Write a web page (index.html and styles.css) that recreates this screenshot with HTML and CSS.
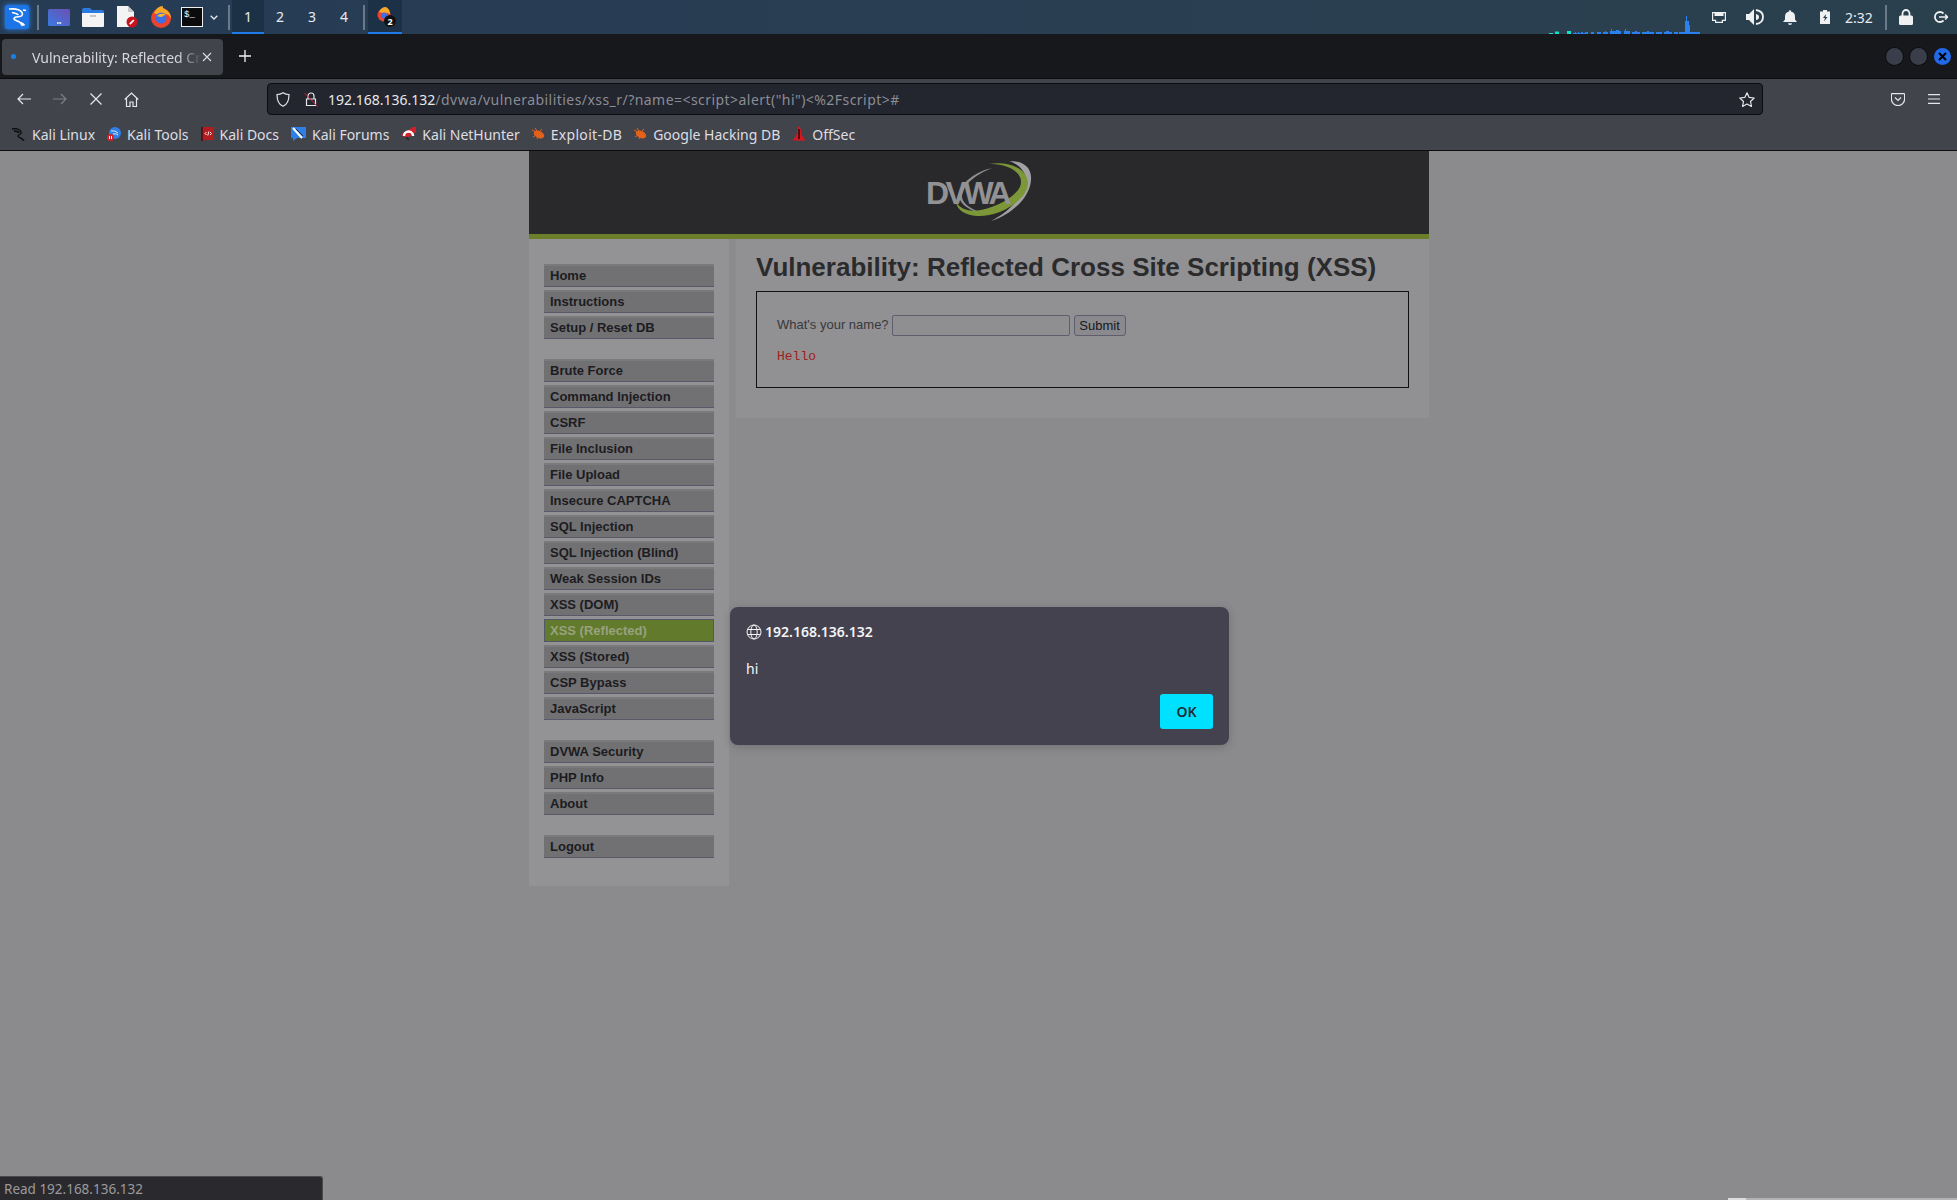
FILE: index.html
```html
<!DOCTYPE html>
<html lang="en">
<head>
<meta charset="utf-8">
<title>Vulnerability: Reflected Cross Site Scripting (XSS)</title>
<link rel="stylesheet" href="styles.css">
</head>
<body>
<div class="screen">
  <header class="taskbar">
    <span class="kali-btn">
      <svg width="24" height="24" viewBox="0 0 24 24"><rect width="24" height="24" rx="2" fill="#1d74e6"/><path d="M4 4c6-.5 11 .5 13 3.500 1.500 2.500-.5 4-3.500 4.200-3 .2-5.500 1-4 3 2 1.800 7 1.500 10 5.800M7 7.500c3 .5 5 1 6.500 2.500M18 5l3 .5M13 16c2 1 3.500 3 4.500 5" fill="none" stroke="#fff" stroke-width="1.600"/></svg>
    </span>
    <span class="sep first"></span>
    <span class="launch">
      <svg width="22" height="17" viewBox="0 0 22 17"><defs><linearGradient id="dg" x1="0" y1="1" x2="1" y2="0"><stop offset="0" stop-color="#3a7be0"/><stop offset="1" stop-color="#6b4fb4"/></linearGradient></defs><rect width="22" height="17" rx="1.500" fill="url(#dg)"/><path d="M9 14h1.200M10.500 14h1.200M12 14h1.200" stroke="#fff" stroke-width="1.500"/></svg>
    </span>
    <span class="launch">
      <svg width="22" height="19" viewBox="0 0 22 19"><path d="M0 2q0-2 2-2h6l2 2h10q2 0 2 2v3H0z" fill="#2a7be0"/><path d="M0 5h22v13q0 1-1 1H1q-1 0-1-1z" fill="#f4f4f4"/><path d="M8 8h6" stroke="#999" stroke-width="1"/></svg>
    </span>
    <span class="launch">
      <svg width="22" height="22" viewBox="0 0 22 22"><path d="M1 0h11l6 6v15H1z" fill="#f4f4f4"/><path d="M12 0l6 6h-6z" fill="#c8c8c8"/><circle cx="16" cy="16" r="5.500" fill="#c8141e"/><path d="M13.800 18.200l4-4" stroke="#fff" stroke-width="1.700"/></svg>
    </span>
    <span class="launch">
      <svg width="22" height="22" viewBox="0 0 22 22"><circle cx="11" cy="12" r="10" fill="#e8442e"/><path d="M4 7q3-7 9-7-1 2 2 3 6 3 6 10-2-5-6-5-5-1-7 1z" fill="#f9a825"/><circle cx="11" cy="12" r="5.500" fill="#3d6fe8"/><path d="M7 10q4-4 9-1-3 0-4 2-3 0-5-1z" fill="#fdb52a"/></svg>
    </span>
    <span class="launch term"><span class="term-box">$_</span></span>
    <svg class="chev" width="8" height="5" viewBox="0 0 8 5"><path d="M.7.7L4 4l3.300-3.300" fill="none" stroke="#e6e8ea" stroke-width="1.300"/></svg>
    <span class="sep"></span>
    <span class="ws active">1</span><span class="ws">2</span><span class="ws">3</span><span class="ws">4</span>
    <span class="sep mid"></span>
    <span class="task">
      <svg width="21" height="21" viewBox="0 0 21 21"><circle cx="8" cy="9" r="6.500" fill="#e8442e"/><path d="M3 6q2-5 7-5 4 2 4 7-4-2-7-1z" fill="#f9a825"/><circle cx="8" cy="9.500" r="3" fill="#3d6fe8"/><circle cx="14" cy="15" r="6" fill="#111"/><text x="14" y="18.500" class="badge-num" text-anchor="middle">2</text></svg>
    </span>
    <svg class="graph" width="152" height="21" viewBox="0 0 152 21">
      <path d="M0 20h4v1H0zM6 18.500h4V21H6zM18 18h4v3h-4z" fill="#12e0c8"/>
      <path d="M24 20h2v-1h1v1h2v-1h1v1h2v-1h2v1h2v1H24zM36 19h3v2h-3zM42 19h3v2h-3zM48 19h4v2h-4zM54 19h2v-1h1v1h2v2h-5zM61 18h1v-2h1v2h4v-1h3v1h2v3H61zM75 18h1v-2h1v2h4v3h-6zM83 19h3v-1h2v1h3v2h-8zM93 19h5v-1h2v1h5v2H93zM107 19h6v2h-6zM115 19h2v-1h3v1h3v2h-8zM125 19h4v2h-4zM130 19h6V8h1V3h1v5h2v4h1v7h5v2h-16zM146 19h5v2h-5z" fill="#2a80ee"/>
    </svg>
    <span class="tray net">
      <svg width="14" height="11" viewBox="0 0 14 11"><path d="M.6.600h12.800v7.800h-3v2H3.600v-2h-3z" fill="none" stroke="#eef0f2" stroke-width="1.200"/><path d="M2.500 1v3h9V1" fill="#eef0f2"/></svg>
    </span>
    <span class="tray">
      <svg width="18" height="16" viewBox="0 0 18 16"><path d="M0 5h3l5-5v16l-5-5H0z" fill="#eef0f2"/><path d="M10 1q7 1 7 7t-7 7" fill="none" stroke="#eef0f2" stroke-width="1.800"/><path d="M10 5q3 .5 3 3t-3 3z" fill="#eef0f2"/></svg>
    </span>
    <span class="tray">
      <svg width="14" height="15" viewBox="0 0 14 15"><path d="M7 0q1 0 1 1.500 4 1 4 5v3l2 2.500H0l2-2.500v-3q0-4 4-5Q6 0 7 0zM5 13.200h4Q9 15 7 15t-2-1.800z" fill="#eef0f2"/></svg>
    </span>
    <span class="tray">
      <svg width="10" height="14" viewBox="0 0 10 14"><path d="M3 0h4v1.500h3V14H0V1.500h3z" fill="#eef0f2"/><path d="M6 4L3 8h2l-1 3.500L7.500 7H5.500z" fill="#2b404e"/></svg>
    </span>
    <span class="clock">2:32</span>
    <span class="sep right"></span>
    <span class="tray lock">
      <svg width="14" height="16" viewBox="0 0 14 16"><path d="M3.500 7V4.500a3.500 3.500 0 017 0V7" fill="none" stroke="#eef0f2" stroke-width="1.800"/><rect y="6.500" width="14" height="9.500" rx="1.500" fill="#eef0f2"/></svg>
    </span>
    <span class="tray exit">
      <svg width="14" height="12" viewBox="0 0 14 12"><path d="M9.500 2.500a5 5 0 100 7" fill="none" stroke="#eef0f2" stroke-width="1.800"/><path d="M5 6h9M11 3.500L13.800 6 11 8.500" fill="none" stroke="#eef0f2" stroke-width="1.500"/></svg>
    </span>
  </header>

  <div class="tabbar">
    <div class="tab">
      <span class="tab-dot"></span>
      <span class="tab-title">Vulnerability: Reflected Cr</span>
      <svg class="tab-x" width="10" height="10" viewBox="0 0 10 10"><path d="M1 1l8 8M9 1l-8 8" stroke="#d8d8dc" stroke-width="1.200"/></svg>
    </div>
    <svg class="newtab" width="12" height="12" viewBox="0 0 12 12"><path d="M6 0v12M0 6h12" stroke="#f0f0f2" stroke-width="1.300"/></svg>
    <div class="win-btns">
      <span class="win"></span><span class="win"></span>
      <span class="win close"><svg width="9" height="9" viewBox="0 0 9 9"><path d="M1 1l7 7M8 1L1 8" stroke="#000" stroke-width="2"/></svg></span>
    </div>
  </div>

  <div class="toolbar">
    <span class="nav"><svg width="14" height="12" viewBox="0 0 14 12"><path d="M14 6H1M6 1L1 6l5 5" fill="none" stroke="#e8e8ea" stroke-width="1.200"/></svg></span>
    <span class="nav"><svg width="14" height="12" viewBox="0 0 14 12"><path d="M0 6h13M8 1l5 5-5 5" fill="none" stroke="#7d7f85" stroke-width="1.200"/></svg></span>
    <span class="nav"><svg width="12" height="12" viewBox="0 0 12 12"><path d="M.5.500l11 11M11.500.500l-11 11" stroke="#e8e8ea" stroke-width="1.200"/></svg></span>
    <span class="nav home"><svg width="15" height="15" viewBox="0 0 15 15"><path d="M.7 7.500L7.500 1l6.800 6.500M2.500 6.500v8h3.500v-4.500h3v4.500h3.500v-8" fill="none" stroke="#e8e8ea" stroke-width="1.200"/></svg></span>
    <div class="urlbar">
      <svg class="shield" width="14" height="15" viewBox="0 0 14 15"><path d="M7 .7c2 1.300 4 1.800 6 1.800 0 6-1.500 10-6 11.800C2.500 12.500 1 8.500 1 2.500c2 0 4-.5 6-1.800z" fill="none" stroke="#e6e6ea" stroke-width="1.200"/></svg>
      <svg class="lock-off" width="14" height="15" viewBox="0 0 14 15"><path d="M4 7V4a3 3 0 016 0v3M2.500 7h9v6.500h-9z" fill="none" stroke="#e6e6ea" stroke-width="1.200"/><path d="M.5 1l13 13.500" stroke="#d3243a" stroke-width="1"/></svg>
      <span class="url"><span class="host">192.168.136.132</span><span class="path">/dvwa/vulnerabilities/xss_r/?name=&lt;script&gt;alert("hi")&lt;%2Fscript&gt;#</span></span>
      <svg class="star" width="16" height="15" viewBox="0 0 16 15"><path d="M8 .8l2.200 4.600 5 .6-3.700 3.500 1 5L8 12l-4.500 2.500 1-5L.8 6l5-.6z" fill="none" stroke="#e6e6ea" stroke-width="1.200" stroke-linejoin="round"/></svg>
    </div>
    <svg class="pocket" width="14" height="13" viewBox="0 0 14 13"><path d="M1 .6h12q.6 0 .6.6V6a6.600 6.600 0 01-13.200 0V1.200Q.4.600 1 .6z" fill="none" stroke="#e6e6ea" stroke-width="1.200"/><path d="M4 4.500l3 3 3-3" fill="none" stroke="#e6e6ea" stroke-width="1.200"/></svg>
    <svg class="burger" width="12" height="10" viewBox="0 0 12 10"><path d="M0 .6h12M0 5h12M0 9.400h12" stroke="#e6e6ea" stroke-width="1.200"/></svg>
  </div>

  <nav class="bookmarks">
    <a class="bm"><svg width="14" height="14" viewBox="0 0 14 14"><path d="M0 2c5-1 8 1 9 3 1 3-3 2-3 4 0 2 4 1 6 5M2 4c2 0 4 0 5 2" fill="none" stroke="#0a0a0a" stroke-width="1.300"/></svg>Kali Linux</a>
    <a class="bm"><svg width="14" height="14" viewBox="0 0 14 14"><circle cx="8" cy="6" r="6" fill="#2f7fe6"/><path d="M4 4q4-1 7 2M6 7q3-1 5 1" fill="none" stroke="#dfe9f8" stroke-width="1"/><circle cx="3.500" cy="10.500" r="3.500" fill="#d5202a"/><path d="M2.500 9v3M4.500 9v3" stroke="#fff"/></svg>Kali Tools</a>
    <a class="bm"><svg width="13" height="14" viewBox="0 0 13 14"><rect x="1" width="12" height="13" fill="#b01c20"/><rect x="0" width="2" height="14" fill="#5a1214"/><path d="M5.500 5L4 6.500 5.500 8M9 5l1.500 1.500L9 8M7.800 4.500L6.800 8.500" fill="none" stroke="#fff" stroke-width=".9"/></svg>Kali Docs</a>
    <a class="bm"><svg width="15" height="14" viewBox="0 0 15 14"><path d="M0 0h15v11H6l-4 3v-3H0z" fill="#2f7fe6"/><path d="M2 1l9 10" stroke="#fff" stroke-width="2"/><path d="M5 2l7 7" stroke="#111" stroke-width=".8"/></svg>Kali Forums</a>
    <a class="bm"><svg width="15" height="14" viewBox="0 0 15 14"><path d="M0 8L12 0h3v5L6 11z" fill="#d5202a"/><path d="M3 9a4.500 4.500 0 019 0" fill="none" stroke="#fff" stroke-width="2.500"/><path d="M5 10l3 3" stroke="#222" stroke-width="1.500"/></svg>Kali NetHunter</a>
    <a class="bm spaced"><svg width="13" height="12" viewBox="0 0 13 12"><ellipse cx="7" cy="6.500" rx="5.500" ry="3.500" fill="#e2621b" transform="rotate(25 7 6.500)"/><path d="M0 2l4 2M3 0l2 3M1 9l3-2M5 11l1-2M10 1L8 3" stroke="#e2621b"/></svg>Exploit-DB</a>
    <a class="bm"><svg width="13" height="12" viewBox="0 0 13 12"><ellipse cx="7" cy="6.500" rx="5.500" ry="3.500" fill="#e2621b" transform="rotate(25 7 6.500)"/><path d="M0 2l4 2M3 0l2 3M1 9l3-2M5 11l1-2M10 1L8 3" stroke="#e2621b"/></svg>Google Hacking DB</a>
    <a class="bm"><svg width="14" height="16" viewBox="0 0 14 16"><path d="M7 0q2 2 2.500 9l4 5.500H.5l4-5.500Q5 2 7 0z" fill="#d7161e"/><path d="M7 3v10" stroke="#2a0a0a" stroke-width="1.500"/></svg>OffSec</a>
  </nav>

  <main class="page">
    <div class="dvwa">
      <div class="dvwa-head">
        <svg class="logo" width="160" height="83" viewBox="0 1 160 83">
          <path d="M110 11C125 11 133 18 132 30 131 48 112 65 92 71 108 63 126 47 127 30 127 22 120 14 110 11z" fill="#a2a2a4"/>
          <path d="M93 18C78 21 62 32 60 44 59 54 72 62 87 64 72 60 62 53 63 45 64 34 78 24 93 18z" fill="#8f8f91"/>
          <path d="M90 14C110 11 128 18 129 33 129 50 100 67 78 66 66 65 58 60 57 52 62 60 72 62 82 60 105 55 123 42 122 31 121 20 105 13 90 14z" fill="#7b9738"/>
          <text x="27" y="54" class="logo-text">DVWA</text>
        </svg>
      </div>
      <div class="dvwa-body">
        <aside class="menu">
          <div class="menu-group">
            <a class="item">Home</a>
            <a class="item">Instructions</a>
            <a class="item">Setup / Reset DB</a>
          </div>
          <div class="menu-group">
            <a class="item">Brute Force</a>
            <a class="item">Command Injection</a>
            <a class="item">CSRF</a>
            <a class="item">File Inclusion</a>
            <a class="item">File Upload</a>
            <a class="item">Insecure CAPTCHA</a>
            <a class="item">SQL Injection</a>
            <a class="item">SQL Injection (Blind)</a>
            <a class="item">Weak Session IDs</a>
            <a class="item">XSS (DOM)</a>
            <a class="item selected">XSS (Reflected)</a>
            <a class="item">XSS (Stored)</a>
            <a class="item">CSP Bypass</a>
            <a class="item">JavaScript</a>
          </div>
          <div class="menu-group">
            <a class="item">DVWA Security</a>
            <a class="item">PHP Info</a>
            <a class="item">About</a>
          </div>
          <div class="menu-group last">
            <a class="item">Logout</a>
          </div>
        </aside>
        <section class="content">
          <h1 class="title">Vulnerability: Reflected Cross Site Scripting (XSS)</h1>
          <div class="vuln-box">
            <form class="name-form">
              <span class="label">What's your name?</span>
              <input class="name-input" type="text">
              <button class="submit" type="button">Submit</button>
            </form>
            <pre class="hello">Hello</pre>
          </div>
        </section>
      </div>
    </div>

    <div class="alert">
      <div class="alert-title">
        <svg width="16" height="16" viewBox="0 0 16 16"><g fill="none" stroke="#f2f2f4" stroke-width="1"><circle cx="8" cy="8" r="7"/><ellipse cx="8" cy="8" rx="3.200" ry="7"/><path d="M1.500 5.500h13M1.500 10.500h13"/></g></svg>
        <span>192.168.136.132</span>
      </div>
      <p class="alert-msg">hi</p>
      <div class="alert-actions"><button class="ok" type="button">OK</button></div>
    </div>

    <div class="status">Read 192.168.136.132</div>
    <div class="edge"></div>
  </main>
</div>
</body>
</html>
```
FILE: styles.css
```css
* { box-sizing: border-box; }
html, body { margin: 0; padding: 0; }
body { background: #8b8b8d; font-family: "Noto Sans", sans-serif; overflow: hidden; }
.screen { width: 1957px; height: 1200px; display: flex; flex-direction: column; overflow: hidden; }

/* desktop panel */
.taskbar { height: 34px; display: flex; align-items: center; background: linear-gradient(90deg, #263c55 0%, #293e52 50%, #2b404d 100%); color: #e8ecf0; flex: none; }
.taskbar svg { display: block; }
.kali-btn { width: 24px; height: 24px; margin-left: 5px; box-shadow: 0 0 5px #2a86ee; border-radius: 2px; }
.sep { width: 2px; height: 25px; background: #6b7a88; flex: none; margin: 0 2px; }
.sep.first { margin: 0 3px 0 8px; }
.sep.mid { margin: 0 2px 0 3px; }
.launch { width: 34px; display: flex; justify-content: center; flex: none; }
.launch.term { margin-left: -3px; }
.term-box { display: block; width: 22px; height: 20px; background: #0b0b0d; border: 1px solid #f0f0f0; font: 9px/14px "Liberation Mono", monospace; color: #fff; padding-left: 2px; }
.chev { margin: 0 8px 0 1px; }
.ws { width: 32px; height: 34px; text-align: center; font-size: 14px; line-height: 33px; flex: none; }
.ws.active { background: #1d3146; border-bottom: 2px solid #1f7be8; }
.task { width: 34px; height: 34px; margin-left: 1px; background: #1d3146; border-bottom: 2px solid #1f7be8; display: flex; align-items: center; justify-content: center; padding-left: 3px; flex: none; }
.badge-num { font: bold 9px "Noto Sans", sans-serif; fill: #fff; }
.graph { margin-left: auto; align-self: flex-end; margin-right: 4px; }
.tray { width: 35px; display: flex; justify-content: center; flex: none; }
.tray.net { width: 27px; margin-right: 5px; }
.clock { font-size: 14px; width: 28px; margin-left: 3px; flex: none; white-space: nowrap; }
.sep.right { margin: 0 0 0 12px; }
.tray.lock { width: 38px; }
.tray.exit { width: 32px; }

/* browser chrome */
.tabbar { height: 45px; flex: none; display: flex; align-items: center; background: #17181c; border-bottom: 1px solid #0c0c10; padding-left: 2px; }
.tab { width: 221px; height: 36px; background: #42444c; border-radius: 4px; display: flex; align-items: center; margin-top: 1px; }
.tab-dot { width: 5px; height: 5px; border-radius: 50%; background: #1b7fe8; margin-left: 9px; flex: none; }
.tab-title { margin-left: 16px; width: 170px; padding-top: 1px; white-space: nowrap; font-size: 14px; color: #d6d6da; flex: none; -webkit-mask-image: linear-gradient(90deg, #000 86%, transparent 100%); mask-image: linear-gradient(90deg, #000 86%, transparent 100%); }
.tab-x { flex: none; }
.newtab { margin-left: 16px; flex: none; }
.win-btns { margin-left: auto; display: flex; gap: 7px; padding-right: 6px; }
.win { width: 17px; height: 17px; border-radius: 50%; background: #3a3d4a; box-shadow: 0 0 0 1px #0d0e12; display: flex; align-items: center; justify-content: center; }
.win.close { background: #2169e6; box-shadow: none; }
.toolbar { height: 41px; flex: none; display: flex; align-items: center; background: #42444c; padding: 0 0 1px 6px; }
.nav { width: 36px; display: flex; justify-content: center; flex: none; }
.nav.home { margin: 0 1px 0 -1px; }
.urlbar { margin-left: 117px; width: 1496px; height: 32px; background: #23252f; border: 1px solid #0c0d12; border-radius: 4px; display: flex; align-items: center; flex: none; }
.shield { margin-left: 8px; flex: none; }
.lock-off { margin-left: 14px; flex: none; }
.url { margin-left: 10px; font-size: 14px; white-space: nowrap; }
.host { color: #e8e8ec; }
.path { color: #8b8d94; letter-spacing: .45px; }
.star { margin-left: auto; margin-right: 7px; flex: none; }
.pocket { margin-left: 128px; flex: none; }
.burger { margin-left: 23px; flex: none; }
.bookmarks { height: 31px; flex: none; display: flex; align-items: center; background: #42444c; border-bottom: 1px solid #0c0c10; padding: 0 0 2px 12px; gap: 12px; }
.bm { display: flex; align-items: center; gap: 6px; font-size: 14px; color: #dedee2; white-space: nowrap; }
.bm.spaced { letter-spacing: .3px; }

/* DVWA page under the dialog dimmer */
.page { flex: 1; position: relative; background: #8b8b8d; }
.dvwa { width: 901px; margin-left: 529px; font-family: "Liberation Sans", Arial, sans-serif; }
.dvwa-head { height: 88px; width: 900px; background: #29292b; border-bottom: 5px solid #6b7f2a; display: flex; justify-content: center; align-items: flex-start; }
.logo { display: block; flex: none; }
.logo-text { font: bold 32px "Liberation Sans", Arial, sans-serif; fill: #929294; letter-spacing: -3.500px; }
.dvwa-body { display: flex; align-items: flex-start; gap: 7px; }
.menu { width: 200px; background: #939395; padding: 25px 15px 28px; flex: none; }
.menu-group { margin-bottom: 20px; }
.menu-group.last { margin-bottom: 0; }
.item { display: block; height: 23px; margin-bottom: 3px; background: #717173; border-top: 2px solid #7a7a7c; border-bottom: 1px solid #585a6c; padding-left: 6px; font-size: 13px; font-weight: bold; line-height: 19px; color: #1c1c21; white-space: nowrap; }
.menu-group.last .item { margin-bottom: 0; }
.item.selected { background: #627a2c; border: 1px solid #54566a; color: #98a27e; padding-left: 5px; line-height: 21px; }
.content { width: 693px; height: 179px; background: #919193; padding: 0 20px; flex: none; }
.title { margin: 0; padding-top: 4px; font-size: 26px; line-height: 48px; font-weight: bold; color: #2b2b2d; white-space: nowrap; }
.vuln-box { height: 97px; border: 1px solid #111; padding: 23px 0 0 20px; }
.name-form { display: flex; align-items: center; height: 21px; }
.label { font-size: 13px; color: #38383c; padding-bottom: 2px; }
.name-input { width: 178px; height: 21px; margin: 0 4px 0 3px; background: #8f8f91; border: 1px solid #5e5e6c; border-radius: 2px; padding: 0; }
.submit { width: 52px; height: 21px; padding: 0; background: #8a8a8e; border: 1px solid #5e5e6c; border-radius: 3px; font: 13px "Liberation Sans", Arial, sans-serif; color: #17171b; }
.hello { margin: 11px 0 0; font: 13px/20px "Liberation Mono", monospace; color: #a01c20; }

/* alert dialog */
.alert { position: absolute; left: 730px; top: 456px; width: 499px; height: 138px; background: #44424f; border-radius: 8px; box-shadow: 0 2px 10px rgba(0,0,0,.18); color: #f4f4f6; padding: 15px 16px 0 16px; display: flex; flex-direction: column; }
.alert-title { display: flex; align-items: center; gap: 3px; font-size: 14px; font-weight: 600; height: 20px; line-height: 20px; }
.alert-msg { margin: 17px 0 0; font-size: 14px; line-height: 20px; }
.alert-actions { display: flex; justify-content: flex-end; margin-top: 15px; }
.ok { width: 53px; height: 35px; background: #00e0ff; border: 0; border-radius: 3px; font: 600 14px "Noto Sans", sans-serif; color: #1c2b33; padding: 0; }

.status { position: absolute; left: 0; bottom: 0; width: 323px; height: 24px; background: #2a2a2e; border-top: 1px solid #4a4a4e; border-right: 1px solid #4a4a4e; border-top-right-radius: 3px; color: #9a9a9e; font-size: 13.500px; line-height: 24px; padding-left: 4px; }
.edge { position: absolute; left: 1728px; right: 0; bottom: 0; height: 2px; background: linear-gradient(90deg, #dcdcde 18px, #b4b4b6 18px); }
```
